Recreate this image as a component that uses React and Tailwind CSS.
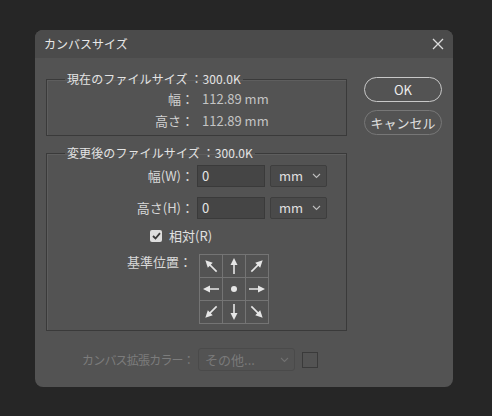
import React from 'react';

const font = { fontFamily: '"Noto Sans CJK JP", "Noto Sans", sans-serif' };

// angle in degrees, 0 = pointing up
const Arrow = ({ rot }) => (
  <svg width="22" height="22" viewBox="0 0 22 22" style={{ transform: `rotate(${rot}deg)` }}>
    <line x1="11" y1="19" x2="11" y2="8" stroke="#e6e6e6" strokeWidth="1.6" />
    <polygon points="11,3 7.5,10 14.5,10" fill="#e6e6e6" />
  </svg>
);

const Dot = () => (
  <svg width="22" height="22" viewBox="0 0 22 22">
    <circle cx="11" cy="11" r="3" fill="#e6e6e6" />
  </svg>
);

const anchors = [315, 0, 45, 270, null, 90, 225, 180, 135];

const Chevron = ({ color = '#bdbdbd' }) => (
  <svg width="9" height="6" viewBox="0 0 9 6">
    <path d="M1 1 L4.5 4.5 L8 1" fill="none" stroke={color} strokeWidth="1.1" />
  </svg>
);

const Select = ({ value }) => (
  <div className="flex h-[22px] w-[57px] items-center justify-between rounded-[2px] border border-[#3e3e3e] bg-[#4a4a4a] pl-[8px] pr-[5px] text-[13px] text-[#e0e0e0]">
    <span>{value}</span>
    <Chevron />
  </div>
);

export default function App() {
  return (
    <div className="h-[416px] w-[492px] bg-[#262626] pl-[35px] pt-[30px]" style={font}>
      <div className="flex h-[357px] w-[418px] flex-col overflow-hidden rounded-[8px] bg-[#535353]">
        {/* title bar */}
        <div className="flex h-[28px] items-center justify-between bg-[#4b4b4b] pl-[9px] pr-[9px]">
          <span className="text-[12px] text-[#e8e8e8]">カンバスサイズ</span>
          <svg width="12" height="12" viewBox="0 0 12 12">
            <path d="M1 1 L11 11 M11 1 L1 11" stroke="#dcdcdc" strokeWidth="1.3" />
          </svg>
        </div>

        <div className="flex pl-[11px] pt-[12px]">
          {/* left column */}
          <div className="flex w-[301px] flex-col">
            <fieldset className="h-[66px] border border-[#3a3a3a] pl-[18px] pr-0 shadow-[inset_1px_1px_0_#5e5e5e]">
              <legend className="px-[2px] text-[12px] leading-[18px] tracking-[0.1px] text-[#e4e4e4]">現在のファイルサイズ ：300.0K</legend>
              <div className="flex h-[22px] items-center text-[13px]">
                <span className="w-[129px] text-right text-[#d0d0d0]">幅：</span>
                <span className="pl-[8px] text-[#c4c4c4]">112.89 mm</span>
              </div>
              <div className="flex h-[22px] items-center text-[13px]">
                <span className="w-[129px] text-right text-[#d0d0d0]">高さ：</span>
                <span className="pl-[8px] text-[#c4c4c4]">112.89 mm</span>
              </div>
            </fieldset>

            <fieldset className="mt-[8px] h-[187px] border border-[#3a3a3a] pl-[18px] pr-0 shadow-[inset_1px_1px_0_#5e5e5e]">
              <legend className="px-[2px] text-[12px] leading-[18px] tracking-[0.1px] text-[#e4e4e4]">変更後のファイルサイズ ：300.0K</legend>
              <div className="mt-[3px] flex h-[22px] items-center text-[13px]">
                <span className="w-[129px] text-right text-[#d8d8d8]">幅(W)：</span>
                <div className="ml-[3px] flex h-[22px] w-[68px] items-center border border-[#3a3a3a] bg-[#454545] pl-[4px] text-[#e6e6e6]">0</div>
                <div className="ml-[5px]"><Select value="mm" /></div>
              </div>
              <div className="mt-[10px] flex h-[22px] items-center text-[13px]">
                <span className="w-[129px] text-right text-[#d8d8d8]">高さ(H)：</span>
                <div className="ml-[3px] flex h-[22px] w-[68px] items-center border border-[#3a3a3a] bg-[#454545] pl-[4px] text-[#e6e6e6]">0</div>
                <div className="ml-[5px]"><Select value="mm" /></div>
              </div>
              <div className="mt-[8px] flex h-[18px] items-center pl-[85px] text-[13px] text-[#e0e0e0]">
                <div className="flex h-[12px] w-[12px] items-center justify-center rounded-[2px] bg-[#dedede]">
                  <svg width="9" height="8" viewBox="0 0 9 8">
                    <path d="M1 4 L3.5 6.5 L8 1.2" fill="none" stroke="#3a3a3a" strokeWidth="1.8" />
                  </svg>
                </div>
                <span className="ml-[7px]">相対(R)</span>
              </div>
              <div className="mt-[10px] flex text-[13px]">
                <span className="w-[127px] text-right leading-[14px] text-[#d8d8d8]">基準位置：</span>
                <div className="ml-[7px] mt-[-1px] grid w-[70px] grid-cols-3 border-l border-t border-[#747474]">
                  {anchors.map((a, i) => (
                    <div key={i} className="flex h-[23px] items-center justify-center border-b border-r border-[#747474]">
                      {a === null ? <Dot /> : <Arrow rot={a} />}
                    </div>
                  ))}
                </div>
              </div>
            </fieldset>

            <div className="mt-[17px] flex items-center pl-[36px] text-[12px] tracking-[-0.8px] text-[#7c7c7c]">
              <span>カンバス拡張カラー：</span>
              <div className="ml-[4px] flex h-[23px] w-[97px] items-center justify-between rounded-[3px] border border-[#4a4a4a] pl-[6px] pr-[5px] text-[13px] tracking-normal text-[#7a7a7a]">
                <span>その他...</span>
                <Chevron color="#707070" />
              </div>
              <div className="ml-[7px] h-[16px] w-[16px] border border-[#3a3a3a] bg-[#535353]" />
            </div>
          </div>

          {/* right column */}
          <div className="ml-[17px] flex w-[78px] flex-col">
            <div className="mt-[7px] flex h-[25px] items-center justify-center rounded-full border-[1.5px] border-[#c8c8c8] text-[13px] text-[#ececec]">OK</div>
            <div className="mt-[8px] flex h-[25px] items-center justify-center rounded-full border-[1.5px] border-[#777777] text-[13px] text-[#e0e0e0]">キャンセル</div>
          </div>
        </div>
      </div>
    </div>
  );
}
